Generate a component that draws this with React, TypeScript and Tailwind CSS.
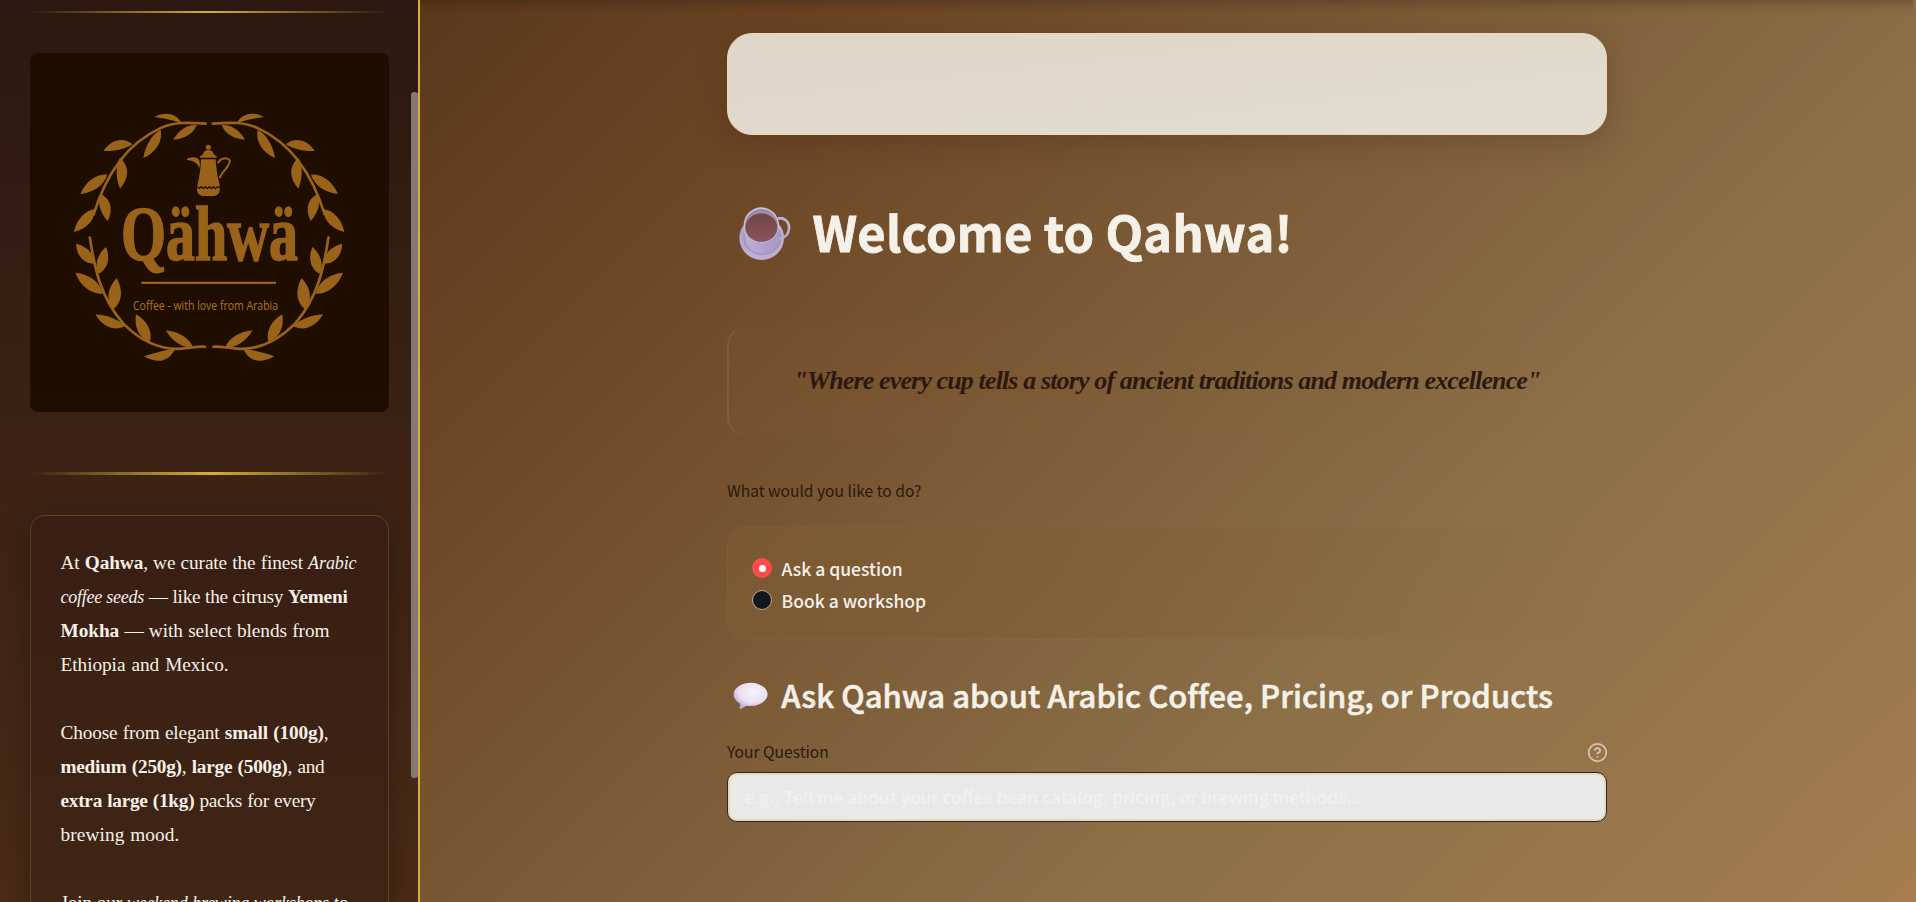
import type { ReactNode } from "react";
import { CircleHelp } from "lucide-react";

type Leaf = [number, number, number, number, number, number];

/* base x, base y, tip x, tip y, bulge on each side of the base-to-tip line */
const LEAVES: Leaf[] = [
  [545, 369, 463, 350, 34, -4],
  [590, 374, 520, 418, 22, 22],
  [482, 388, 430, 473, 20, 32],
  [398, 432, 310, 452, 38, 12],
  [360, 473, 360, 565, 18, 38],
  [322, 523, 241, 581, 28, 26],
  [300, 580, 323, 662, 20, 36],
  [284, 627, 222, 695, 26, 30],
  [284, 790, 228, 730, 26, 32],
  [296, 820, 318, 740, 30, 26],
  [308, 880, 226, 817, 30, 30],
  [340, 927, 350, 833, 32, 34],
  [375, 978, 286, 942, 16, 36],
  [450, 1024, 408, 942, 28, 32],
  [525, 1045, 432, 1068, 4, 44],
  [580, 1042, 497, 990, 24, 24],
];

function leafPath([bx, by, tx, ty, a, b]: Leaf) {
  const dx = tx - bx;
  const dy = ty - by;
  const len = Math.hypot(dx, dy);
  const nx = dy / len;
  const ny = -dx / len;
  const at = (t: number, s: number) => `${(bx + dx * t + nx * s).toFixed(1)} ${(by + dy * t + ny * s).toFixed(1)}`;
  return `M${bx} ${by}C${at(0.25, b * 0.75)} ${at(0.65, b * 0.75)} ${tx} ${ty}C${at(0.65, -a * 0.75)} ${at(0.25, -a * 0.75)} ${bx} ${by}Z`;
}

function Branches() {
  return (
    <>
      <path d="M620 370C560 366 522 364 480 384C380 430 318 520 280 645" fill="none" stroke="#99631a" strokeWidth="8" />
      <path d="M269 708C283 800 300 890 370 970C420 1020 480 1050 545 1045C575 1043 600 1036 618 1040" fill="none" stroke="#99631a" strokeWidth="8" />
      {LEAVES.map((leaf, i) => (
        <path key={i} d={leafPath(leaf)} />
      ))}
    </>
  );
}

function Logo() {
  return (
    <svg viewBox="90 158 1077 1077" className="mt-10 block size-[359px] shrink-0 rounded-lg bg-[#1f0d00]" fill="#99631a">
      <Branches />
      <g transform="translate(1255 0) scale(-1 1)">
        <Branches />
      </g>
      <circle cx="625" cy="441" r="7.5" />
      <path d="M600 472V468Q609 465 610 459Q614 449 625 449Q636 449 640 459Q642 465 650 468V472Z" />
      <path d="M603 477H647Q650 522 658 550Q666 587 636 587H614Q584 587 593 550Q601 522 603 477Z" />
      <path d="M561 475Q600 462 600 492L598 504Q590 480 561 479Z" />
      <path d="M654 489C660 472 683 470 689 480C693 498 664 513 659 534" fill="none" stroke="#99631a" strokeWidth="6" />
      <path d="M592 560L598 564L604 559L610 565L616 559L622 565L628 559L634 565L640 559L646 565L652 559L659 562" fill="none" stroke="#1f0d00" strokeWidth="4" />
      <text x="363" y="779" textLength="531" lengthAdjust="spacingAndGlyphs" fontSize="235" fontWeight="700" fontFamily="'Liberation Serif', serif" stroke="#99631a" strokeWidth="5" strokeLinejoin="miter">
        Qähwä
      </text>
      <rect x="424" y="844.5" width="404" height="6" fill="#a56b18" />
      <text x="399" y="930" textLength="435" lengthAdjust="spacingAndGlyphs" fontSize="39" fontFamily="'Open Sans', sans-serif" fill="#ad7622">
        Coffee - with love from Arabia
      </text>
    </svg>
  );
}

function Line({ className, children }: { className: string; children?: ReactNode }) {
  return <div className={`h-[34px] whitespace-nowrap [text-align-last:justify] ${className}`}>{children}</div>;
}

function It({ children }: { children: ReactNode }) {
  return <em className="text-[18px]">{children}</em>;
}

function Sidebar() {
  return (
    <aside className="relative flex h-full w-[420px] shrink-0 flex-col overflow-hidden border-r-2 border-[#d4af37] bg-linear-to-b from-[#2c1810] to-[#4a2c17] pl-[30px] pt-[11px]">
      <div className="h-[2px] w-[359px] shrink-0 bg-linear-to-r from-transparent via-[#d4af37] to-transparent" />
      <Logo />
      <div className="mt-[60px] h-[3px] w-[359px] shrink-0 bg-linear-to-r from-transparent via-[#d4af37] to-transparent" />
      <div className="mt-10 h-[520px] w-[359px] shrink-0 rounded-[15px] border border-[#d4af37]/22 bg-linear-to-b from-[#381e13] to-[#432816] px-[29.5px] py-[30px] font-['Liberation_Serif',serif] text-[19.3px] leading-[34px] text-[#f5f1e8] shadow-[0_8px_32px_rgba(0,0,0,0.3)]">
        <Line className="w-[296px] tracking-[-0.1px]">At <b>Qahwa</b>, we curate the finest <It>Arabic</It></Line>
        <Line className="w-[287px] tracking-[-0.25px]"><It>coffee seeds</It> — like the citrusy <b>Yemeni</b></Line>
        <Line className="w-[269px] tracking-[-0.05px]"><b>Mokha</b> — with select blends from</Line>
        <Line className="w-[168px] tracking-[-0.05px]">Ethiopia and Mexico.</Line>
        <Line className="w-full" />
        <Line className="w-[268px] tracking-[-0.15px]">Choose from elegant <b>small (100g)</b>,</Line>
        <Line className="w-[264px] tracking-[-0.25px]"><b>medium (250g)</b>, <b>large (500g)</b>, and</Line>
        <Line className="w-[255px] tracking-[-0.25px]"><b>extra large (1kg)</b> packs for every</Line>
        <Line className="w-[119px] tracking-[0.1px]">brewing mood.</Line>
        <Line className="w-full" />
        <Line className="w-[288px] tracking-[-0.2px]">Join our <It>weekend brewing workshops</It> to</Line>
      </div>
      <div className="absolute right-0 top-[92px] h-[686px] w-[7px] rounded-[3px] bg-[#857870]" />
    </aside>
  );
}

function CupIcon() {
  return (
    <svg viewBox="80 615 165 170" className="ml-[9.5px] mt-1 h-[56.7px] w-[55px] shrink-0">
      <defs>
        <linearGradient id="saucer" x1="0" y1="0" x2="1" y2="1">
          <stop offset="0" stopColor="#a99bc4" />
          <stop offset="0.6" stopColor="#c3b2d8" />
          <stop offset="1" stopColor="#b9a9cf" />
        </linearGradient>
        <linearGradient id="body" x1="0" y1="0" x2="1" y2="0">
          <stop offset="0" stopColor="#bdb1cf" />
          <stop offset="0.6" stopColor="#b39fd0" />
          <stop offset="1" stopColor="#a99bbd" />
        </linearGradient>
        <linearGradient id="brew" x1="0" y1="0" x2="0" y2="1">
          <stop offset="0" stopColor="#6f4545" />
          <stop offset="1" stopColor="#8a545a" />
        </linearGradient>
      </defs>
      <ellipse cx="154" cy="714" rx="67" ry="66" fill="url(#saucer)" />
      <ellipse cx="156" cy="712" rx="58" ry="54" fill="#a697bf" />
      <path d="M203 656C222 652 236 664 236 685C235 704 222 714 206 717" fill="none" stroke="#b5a6cc" strokeWidth="8" />
      <path d="M203 653C224 650 239 664 238 685" fill="none" stroke="#d0c5de" strokeWidth="3" />
      <path d="M101 676L107 728Q122 761 156 761Q190 761 203 728L206 676Z" fill="url(#body)" />
      <circle cx="153" cy="675" r="53" fill="#cdc2da" />
      <circle cx="153" cy="676" r="49" fill="#9a8ba8" />
      <ellipse cx="153" cy="683" rx="48" ry="42.5" fill="url(#brew)" />
    </svg>
  );
}

function BubbleIcon() {
  return (
    <svg viewBox="70 64 106 84" className="ml-[6px] mt-[6.5px] h-7 w-[35.3px] shrink-0">
      <defs>
        <radialGradient id="bubble" cx="0.58" cy="0.35" r="0.65">
          <stop offset="0" stopColor="#f6f2fa" />
          <stop offset="0.65" stopColor="#e9e0f1" />
          <stop offset="1" stopColor="#bfaedb" />
        </radialGradient>
      </defs>
      <path d="M123 66C151 66 174 82 174 101C174 120 151 136 123 136C118 136 113 136 109 135C103 140 96 144 91 144C89 144 89 142 90 140C92 136 92 132 90 128C79 122 72 112 72 101C72 82 95 66 123 66Z" fill="url(#bubble)" />
    </svg>
  );
}

function Radio({ label, checked }: { label: string; checked?: boolean }) {
  return (
    <div className="flex h-6 items-center">
      {checked ? (
        <span className="flex size-5 items-center justify-center rounded-full bg-[#ff4b4b]">
          <span className="size-[7px] rounded-full bg-white" />
        </span>
      ) : (
        <span className="size-5 rounded-full border border-[#c0ad96] bg-[#131720]" />
      )}
      <span className="ml-[9.5px] pt-[2px] text-[17.5px] font-medium leading-6 text-[#f5f1ec]">{label}</span>
    </div>
  );
}

export default function App() {
  return (
    <div className="flex h-[902px] w-[1916px] overflow-hidden bg-[linear-gradient(135deg,#4a2c17_0%,#6b4423_30%,#8b6f47_70%,#a67c50_100%)] font-['Noto_Sans_CJK_SC',sans-serif]">
      <Sidebar />
      <main className="relative flex flex-1 flex-col pl-[307px] pt-[33px]">
        <div className="absolute left-0 right-[3px] top-0 h-4 bg-linear-to-b from-black/18 via-black/5 to-transparent" />
        <div className="h-[102px] w-[880px] rounded-[25px] border border-[#e8d9b4] bg-linear-to-br from-[#dfd6c9] to-[#e4dccf] shadow-[0_8px_32px_rgba(44,24,16,0.22)]" />

        <h1 className="mt-[66px] flex h-[60px] w-[880px] text-[48.8px] font-bold leading-[60px] tracking-[0.2px] text-[#f5f1e8] [-webkit-text-stroke:0.8px_#f5f1e8]">
          <CupIcon />
          <span className="ml-[21px] whitespace-nowrap">Welcome to Qahwa!</span>
        </h1>

        <div className="relative mt-[65px] flex h-[110px] w-[880px] items-center justify-center">
          <div className="absolute inset-0 rounded-[20px] border-l-2 border-[#a58a55]/25 bg-linear-to-r from-[#d4af37]/2 to-transparent" />
          <p className="relative whitespace-nowrap pb-[2px] font-['Liberation_Serif',serif] text-[26px] font-bold italic tracking-[-0.87px] text-[#2c1810]">
            "Where every cup tells a story of ancient traditions and modern excellence"
          </p>
        </div>

        <p className="mt-[42px] text-[15.6px] leading-6 text-[#2c1810]">What would you like to do?</p>

        <div className="mt-6 flex h-[114px] w-[880px] flex-col rounded-[20px] bg-linear-to-r from-[#a58a55]/12 to-transparent p-px">
          <div className="flex h-full flex-col gap-2 rounded-[19px] bg-linear-to-r from-[#7a5731]/60 to-transparent pl-6 pt-[29px]">
            <Radio label="Ask a question" checked />
            <Radio label="Book a workshop" />
          </div>
        </div>

        <h2 className="mt-[35px] flex h-10 w-[880px] text-[31px] font-medium leading-10 tracking-[0.06px] text-[#f5f1e8] [-webkit-text-stroke:0.6px_#f5f1e8]">
          <BubbleIcon />
          <span className="ml-[13px] whitespace-nowrap">Ask Qahwa about Arabic Coffee, Pricing, or Products</span>
        </h2>

        <div className="mt-6 flex h-6 w-[880px] items-center justify-between">
          <label className="text-[15.6px] leading-6 text-[#2c1810]">Your Question</label>
          <CircleHelp className="size-[21px] translate-x-px translate-y-px text-[#d6c6b2]" strokeWidth={2} />
        </div>

        <div className="mt-[9px] h-[50px] w-[880px] rounded-[10px] border border-[#262730] bg-[#e8dbb2] p-[2px]">
          <div className="flex h-full items-center rounded-[7px] bg-[#e9e9e9] pl-[14.5px] text-[17.4px] font-medium leading-6 text-[#f1f1f1]">
            e.g., Tell me about your coffee bean catalog, pricing, or brewing methods...
          </div>
        </div>
      </main>
    </div>
  );
}
